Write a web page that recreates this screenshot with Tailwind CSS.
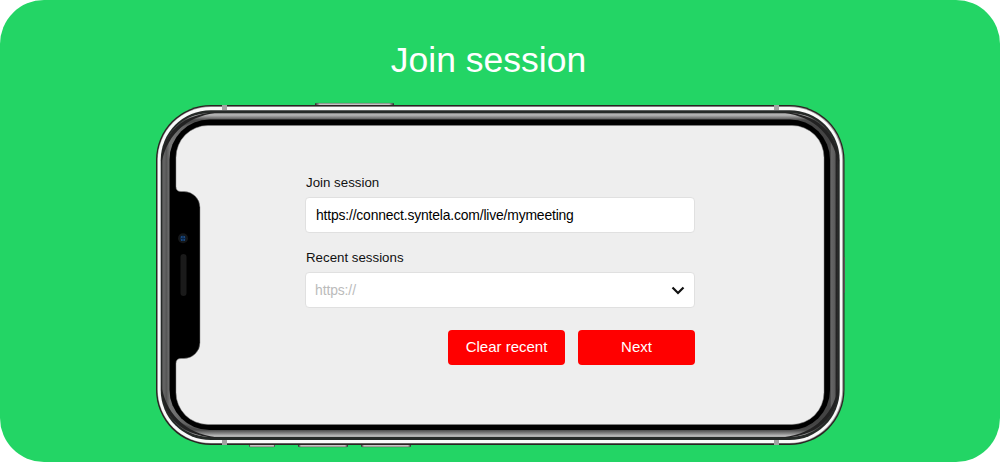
<!DOCTYPE html>
<html lang="en">
<head>
  <meta charset="UTF-8">
  <meta name="viewport" content="width=device-width, initial-scale=1.0">
  <script src="https://cdn.jsdelivr.net/npm/@tailwindcss/browser@4"></script>
  <title>Join session</title>
</head>
<body class="bg-white font-['Liberation_Sans',Arial,sans-serif]">
  <main class="relative w-[1000px] h-[462px] overflow-hidden rounded-[44px] bg-[#23d565]">
    <!-- phone -->
    <svg class="absolute inset-0" width="1000" height="462" viewBox="0 0 1000 462" fill="none">
      <defs>
        <linearGradient id="side" gradientUnits="userSpaceOnUse" x1="161" y1="0" x2="839" y2="0">
          <stop offset="0" stop-color="#333" />
          <stop offset=".004" stop-color="#666" />
          <stop offset=".008" stop-color="#555" />
          <stop offset=".013" stop-color="#777" />
          <stop offset=".05" stop-color="#555" />
          <stop offset=".95" stop-color="#444" />
          <stop offset=".987" stop-color="#444" />
          <stop offset=".989" stop-color="#666" />
          <stop offset=".994" stop-color="#5a5a5a" />
          <stop offset=".996" stop-color="#222" />
          <stop offset="1" stop-color="#333" />
        </linearGradient>
        <linearGradient id="top" gradientUnits="userSpaceOnUse" x1="0" y1="113" x2="0" y2="120">
          <stop offset="0" stop-color="#777" />
          <stop offset=".25" stop-color="#bbb" />
          <stop offset=".6" stop-color="#888" />
          <stop offset="1" stop-color="#4a4a4a" />
        </linearGradient>
        <linearGradient id="bottom" gradientUnits="userSpaceOnUse" x1="0" y1="430" x2="0" y2="437">
          <stop offset="0" stop-color="#4a4a4a" />
          <stop offset=".5" stop-color="#888" />
          <stop offset=".9" stop-color="#c4c4c4" />
          <stop offset="1" stop-color="#777" />
        </linearGradient>
        <linearGradient id="key" x1="0" y1="0" x2="1" y2="0">
          <stop offset="0" stop-color="#222" />
          <stop offset=".06" stop-color="#c4c4c4" />
          <stop offset=".94" stop-color="#c4c4c4" />
          <stop offset="1" stop-color="#222" />
        </linearGradient>
      </defs>

      <!-- hardware keys -->
      <rect x="315" y="103" width="79" height="4" rx="1" fill="url(#key)" />
      <path d="M316 103.300H393" stroke="#576b5b" stroke-width=".6" />
      <g fill="url(#key)">
        <rect x="249" y="443" width="26" height="4" rx="1" />
        <rect x="298" y="443" width="50" height="4" rx="1" />
        <rect x="361" y="443" width="50" height="4" rx="1" />
      </g>
      <path d="M250 446.800H274M299 446.800H347M362 446.800H410" stroke="#6b5048" stroke-width=".5" />
      <rect x="842" y="257" width="3" height="36" rx="1" fill="#8a8a8a" />

      <!-- steel frame -->
      <rect x="156" y="105" width="688.500" height="340" rx="55" fill="#2b2222" />
      <rect x="157.300" y="106.300" width="686" height="337.200" rx="53.700" fill="#999" />
      <rect x="157.800" y="107" width="684.400" height="336" rx="53" fill="#fafafa" />
      <rect x="160.700" y="110.200" width="679" height="329.800" rx="50" fill="#262a28" />
      <rect x="162" y="113" width="676" height="324" rx="48" fill="url(#side)" />
      <path d="M170 136C176 122 192 113 212 113H788C808 113 824 122 830 136C819 125 806 120 790 120H210C194 120 181 125 170 136Z" fill="url(#top)" />
      <path d="M170 413C176 428 192 437 212 437H788C808 437 824 428 830 413C819 425 806 430 790 430H210C194 430 181 425 170 413Z" fill="url(#bottom)" />
      <!-- darker crescents where the band turns -->
      <path d="M161 165C161 134 182 112 222 112C190 115 168 130 161 165ZM839 165C839 134 818 112 778 112C810 115 832 130 839 165ZM161 385C161 416 182 438 222 438C190 435 168 420 161 385ZM839 385C839 416 818 438 778 438C810 435 832 420 839 385Z" fill="#222" />
      <path d="M222 105h5v5h-5zM774 105h5v5h-5zM222 440h5v5h-5zM774 440h5v5h-5z" fill="#a3a3a3" />

      <!-- glass -->
      <rect x="169.500" y="119.500" width="660.500" height="310.500" rx="40" fill="#000" />
      <path d="M208 125.500H792A32 32 0 0 1 824 157.500V392.500A32 32 0 0 1 792 424.500H208A32 32 0 0 1 176 392.500V363.500Q176 358.500 181 358.500H184A16 16 0 0 0 200 342.500V207.500A16 16 0 0 0 184 191.500H181Q176 191.500 176 186.500V157.500A32 32 0 0 1 208 125.500Z" fill="#eee" stroke="#888" stroke-width=".5" />

      <!-- camera and speaker -->
      <circle cx="183" cy="238.300" r="5" fill="#151719" />
      <circle cx="182.800" cy="238.300" r="2.800" fill="#0a2547" />
      <path d="M181 237h1.500M183.500 237h1.500M181 240h1.500M183.500 240h1.500" stroke="#2a6cb5" />
      <rect x="180.500" y="254" width="6" height="42" rx="3" fill="#1a1a1a" />
    </svg>

    <div class="relative flex flex-col items-center pt-[38px]">
      <h1 class="pr-[23px] text-[35.5px] leading-[44px] text-white">Join session</h1>

      <form class="mt-[92px] w-[390px] text-[13.3px] text-[#111]">
        <label class="block pl-px leading-[18px]">Join session</label>
        <div class="mt-[5px] flex h-9 items-center rounded-[4px] border border-[#e0e0e0] bg-white pl-[10px] text-[13.9px] tracking-[-0.17px] text-black">https://connect.syntela.com/live/mymeeting</div>

        <label class="mt-[16px] block pl-px leading-[18px]">Recent sessions</label>
        <div class="mt-[5px] flex h-9 items-center justify-between rounded-[4px] border border-[#e0e0e0] bg-white pl-[9px] pr-[9px] text-[13.9px] tracking-[-0.1px] text-[#bbb]">
          <span class="pt-px">https://</span>
          <svg width="14" height="10" viewBox="0 0 14 10" fill="none" stroke="#111" stroke-width="2.200">
            <path d="M1.500 2.500L7 8L12.500 2.500" />
          </svg>
        </div>

        <div class="mt-[22px] flex justify-end gap-[13px] text-[15px] text-white">
          <button type="button" class="h-[35px] w-[117px] rounded-[4px] bg-[#f00]">Clear recent</button>
          <button type="button" class="h-[35px] w-[117px] rounded-[4px] bg-[#f00]">Next</button>
        </div>
      </form>
    </div>
  </main>
</body>
</html>
